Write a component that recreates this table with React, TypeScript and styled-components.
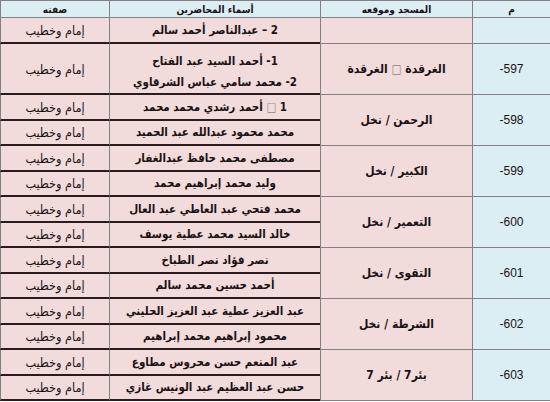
import styled, { createGlobalStyle } from 'styled-components';

const GlobalStyle = createGlobalStyle`
  html, body {
    margin: 0;
    padding: 0;
    background: #ffffff;
  }
  body {
    font-family: "DejaVu Sans Condensed", "DejaVu Sans", "Liberation Sans", sans-serif;
    color: #1a1214;
  }
`;

const PINK = '#f2dcdb';
const BLUE = '#daeef3';
const GREY_LINE = '#858083';
const DARK_LINE = '#2a1c1e';

const Table = styled.div`
  direction: rtl;
  display: grid;
  width: 550px;
  grid-template-columns: 78px 152px 211px 109px;
  grid-template-rows: 17px 26px 51px repeat(12, 25.5px);
  border-top: 1px solid ${GREY_LINE};
`;

const Cell = styled.div<{ $span?: number }>`
  box-sizing: border-box;
  display: flex;
  flex-direction: column;
  align-items: center;
  justify-content: center;
  text-align: center;
  border-left: 1px solid ${GREY_LINE};
  grid-row: ${({ $span }) => ($span ? `span ${$span}` : 'auto')};
  overflow: hidden;
  white-space: nowrap;
`;

const HeaderCell = styled(Cell)`
  background: ${BLUE};
  border-bottom: 1px solid ${GREY_LINE};
  font-size: 10px;
  font-weight: bold;
`;

const NumCell = styled(Cell)`
  background: ${BLUE};
  border-bottom: 1px solid ${GREY_LINE};
  direction: ltr;
  font-family: "Liberation Sans", sans-serif;
  font-size: 12px;
`;

const MosqueCell = styled(Cell)`
  background: ${PINK};
  border-bottom: 1px solid ${GREY_LINE};
  font-size: 12px;
  font-weight: bold;
`;

const NameCell = styled(Cell)<{ $multi?: boolean }>`
  background: ${PINK};
  border-bottom: 2px solid ${DARK_LINE};
  font-size: 11.5px;
  font-weight: bold;
  line-height: 21px;
  padding-top: ${({ $multi }) => ($multi ? '6px' : '1px')};
`;

const RoleCell = styled(Cell)`
  background: ${PINK};
  border-bottom: 2px solid ${DARK_LINE};
  font-size: 12.5px;
  padding-top: 1px;
`;

const Tofu = styled.span`
  color: #8f8587;
  font-weight: normal;
`;

type Pair = { num: string; mosque: string; names: [string, string] };

const pairs: Pair[] = [
  { num: '-598', mosque: 'الرحمن / نخل', names: ['أحمد رشدي محمد محمد', 'محمد محمود عبدالله عبد الحميد'] },
  { num: '-599', mosque: 'الكبير / نخل', names: ['مصطفى محمد حافظ عبدالغفار', 'وليد محمد إبراهيم محمد'] },
  { num: '-600', mosque: 'التعمير / نخل', names: ['محمد فتحي عبد العاطي عبد العال', 'خالد السيد محمد عطية يوسف'] },
  { num: '-601', mosque: 'التقوى / نخل', names: ['نصر فؤاد نصر الطباخ', 'أحمد حسين محمد سالم'] },
  { num: '-602', mosque: 'الشرطة / نخل', names: ['عبد العزيز عطية عبد العزيز الحليني', 'محمود إبراهيم محمد إبراهيم'] },
  { num: '-603', mosque: 'بئر7 / بئر 7', names: ['عبد المنعم حسن محروس مطاوع', 'حسن عبد العظيم عبد الونيس غازي'] },
];

const ROLE = 'إمام وخطيب';

export default function App() {
  return (
    <>
      <GlobalStyle />
      <Table>
        <HeaderCell>م</HeaderCell>
        <HeaderCell>المسجد وموقعه</HeaderCell>
        <HeaderCell>أسماء المحاضرين</HeaderCell>
        <HeaderCell>صفته</HeaderCell>

        <NumCell />
        <MosqueCell />
        <NameCell>2 – عبدالناصر أحمد سالم</NameCell>
        <RoleCell>{ROLE}</RoleCell>

        <NumCell>-597</NumCell>
        <MosqueCell>
          <span>
            الغرقدة <Tofu>□</Tofu> الغرقدة
          </span>
        </MosqueCell>
        <NameCell $multi>
          <span>1- أحمد السيد عبد الفتاح</span>
          <span>2- محمد سامي عباس الشرقاوي</span>
        </NameCell>
        <RoleCell>{ROLE}</RoleCell>

        {pairs.map((p, i) => (
          <>
            <NumCell key={`n${i}`} $span={2}>{p.num}</NumCell>
            <MosqueCell key={`m${i}`} $span={2}>{p.mosque}</MosqueCell>
            <NameCell key={`a${i}`}>
              {i === 0 ? (
                <span>
                  1 <Tofu>□</Tofu> {p.names[0]}
                </span>
              ) : (
                p.names[0]
              )}
            </NameCell>
            <RoleCell key={`r${i}`}>{ROLE}</RoleCell>
            <NameCell key={`b${i}`}>{p.names[1]}</NameCell>
            <RoleCell key={`s${i}`}>{ROLE}</RoleCell>
          </>
        ))}
      </Table>
    </>
  );
}
